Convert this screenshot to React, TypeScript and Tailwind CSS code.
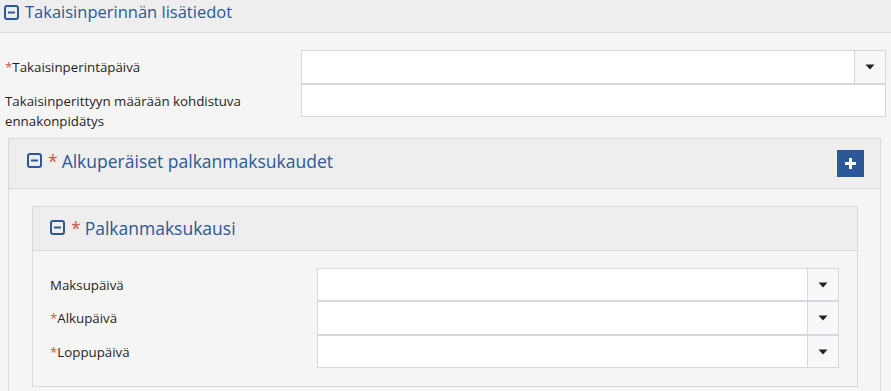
import React from "react";

const BLUE = "text-[#2c5897]";

function MinusSquare({ className = "" }: { className?: string }) {
  return (
    <svg width="15" height="15" viewBox="0 0 15 15" className={className}>
      <rect x="1" y="1" width="13" height="13" rx="2" fill="none" stroke="#2c5897" strokeWidth="2" />
      <rect x="4" y="6.5" width="7" height="2" fill="#2c5897" />
    </svg>
  );
}

function Caret() {
  return (
    <svg width="10" height="6" viewBox="0 0 10 6">
      <path d="M0.5 0.5 H9.5 L5 5.5 Z" fill="#222" />
    </svg>
  );
}

function Input({ dropdown, h }: { dropdown?: boolean; h: string }) {
  return (
    <div className={`flex flex-1 bg-white border border-[#d5d8dc] ${h}`}>
      <div className="flex-1" />
      {dropdown && (
        <div className="w-[31px] bg-[#f7f8fa] border-l border-[#d5d8dc] flex items-center justify-center">
          <Caret />
        </div>
      )}
    </div>
  );
}

function Star() {
  return <span className="text-[#d0544c]">*</span>;
}

export default function App() {
  return (
    <div
      className="w-[891px] h-[391px] overflow-hidden bg-[#f5f5f5] text-[#1f1f1f] text-[13.3px]"
      style={{ fontFamily: '"Open Sans", "Liberation Sans", sans-serif' }}
    >
      {/* Top header */}
      <div className="h-[33px] bg-[#eeeeee] border-b border-[#d9d9d9] flex items-start pl-[4px]">
        <div className={`flex items-center gap-[6px] h-[24px] ${BLUE} text-[16.5px] leading-[22px]`}>
          <MinusSquare />
          <span>Takaisinperinnän lisätiedot</span>
        </div>
      </div>

      {/* Rows */}
      <div className="pt-[17px] pl-[5px] pr-[5px]">
        <div className="flex items-center">
          <div className="w-[296px] leading-[20px]">
            <Star />Takaisinperintäpäivä
          </div>
          <Input dropdown h="h-[34px]" />
        </div>
        <div className="flex items-start">
          <div className="w-[296px] leading-[20px] pt-[7px]">
            Takaisinperittyyn määrään kohdistuva
            <br />
            ennakonpidätys
          </div>
          <Input h="h-[33px]" />
        </div>
      </div>

      {/* Outer panel */}
      <div className="ml-[8px] w-[873px] mt-[7px] border border-[#d9d9d9] bg-[#f5f5f5]">
        <div className="h-[50px] bg-[#eeeeee] border-b border-[#d9d9d9] flex items-center pl-[18px] pr-[16px]">
          <div className={`flex items-center mb-[6px] ${BLUE} text-[17.5px] leading-[22px]`}>
            <MinusSquare />
            <span className="ml-[6px] mr-[4px]"><Star /></span>
            <span>Alkuperäiset palkanmaksukaudet</span>
          </div>
          <div className="flex-1" />
          <div className="w-[27px] h-[27px] bg-[#2c5897] flex items-center justify-center">
            <svg width="11" height="11" viewBox="0 0 11 11">
              <rect x="0" y="4" width="11" height="3" fill="#fff" />
              <rect x="4" y="0" width="3" height="11" fill="#fff" />
            </svg>
          </div>
        </div>

        <div className="pt-[17px] pl-[23px] pr-[22px] pb-[20px]">
          {/* Inner panel */}
          <div className="border border-[#d9d9d9]">
            <div className="h-[44px] bg-[#eeeeee] border-b border-[#d9d9d9] flex items-center pl-[17px]">
              <div className={`flex items-center mb-[2px] ${BLUE} text-[17.5px] leading-[22px]`}>
                <MinusSquare />
                <span className="ml-[6px] mr-[4px]"><Star /></span>
                <span>Palkanmaksukausi</span>
              </div>
            </div>
            <div className="pt-[17px] pl-[17px] pr-[18px] pb-[18px]">
              <div className="flex items-center">
                <div className="w-[267px] leading-[20px]">Maksupäivä</div>
                <Input dropdown h="h-[33px]" />
              </div>
              <div className="flex items-center">
                <div className="w-[267px] leading-[20px]">
                  <Star />Alkupäivä
                </div>
                <Input dropdown h="h-[34px]" />
              </div>
              <div className="flex items-center">
                <div className="w-[267px] leading-[20px]">
                  <Star />Loppupäivä
                </div>
                <Input dropdown h="h-[33px]" />
              </div>
            </div>
          </div>
        </div>
      </div>
    </div>
  );
}
